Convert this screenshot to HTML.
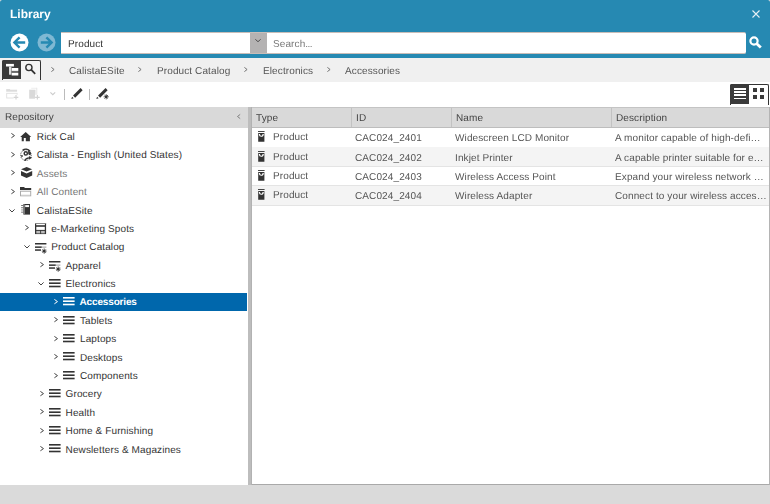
<!DOCTYPE html><html><head><meta charset="utf-8"><style>
*{margin:0;padding:0;box-sizing:border-box}
html,body{width:770px;height:504px;overflow:hidden;background:#d6dadc;font-family:"Liberation Sans",sans-serif;font-size:10px;color:#333}
.a{position:absolute}
.t{position:absolute;white-space:nowrap;line-height:12px;text-rendering:geometricPrecision}
.g{will-change:transform}
svg{position:absolute;overflow:visible}
</style></head><body><div class="a" style="left:0;top:58px;width:770px;height:446px;background:#fff"></div>
<div class="a" style="left:0;top:0;width:770px;height:58px;background:#2689b2;border-radius:2.5px 2.5px 0 0"></div>
<div class="t g" style="left:10px;top:6.94px;font-size:12px;line-height:14.40px;color:#fff;font-weight:bold;letter-spacing:0px;">Library</div>
<svg style="left:752px;top:10px" width="8" height="8" viewBox="0 0 8 8"><path d="M0.5 0.5L7.5 7.5M7.5 0.5L0.5 7.5" stroke="#e6f0f5" stroke-width="1.1"/></svg>
<svg style="left:10px;top:33px" width="19" height="19" viewBox="0 0 19 19"><circle cx="9.5" cy="9.5" r="9" fill="#fff"/><path d="M4.6 9.5H15.2M9.6 4.3L4.4 9.5L9.6 14.7" stroke="#2689b2" stroke-width="2.4" fill="none"/></svg>
<svg style="left:37px;top:33px" width="19" height="19" viewBox="0 0 19 19"><circle cx="9.5" cy="9.5" r="9" fill="#7fb8d3"/><path d="M3.8 9.5H14.4M9.4 4.3L14.6 9.5L9.4 14.7" stroke="#2689b2" stroke-width="2.4" fill="none"/></svg>
<div class="a" style="left:61px;top:32px;width:190px;height:22px;background:#fff;border-top:1px solid #c8bdb8;border-bottom:1px solid #c8bdb8"></div>
<div class="t g" style="left:68.3px;top:38.83px;font-size:10px;line-height:12.00px;color:#333;font-weight:normal;letter-spacing:0.11px;">Product</div>
<div class="a" style="left:250px;top:32px;width:17px;height:22px;background:#b4b2b2;border-top:1px solid #c8bdb8;border-bottom:1px solid #c8bdb8"></div>
<svg style="left:255px;top:39px" width="6" height="3" viewBox="0 0 6 3"><path d="M0.3 0.3L3 2.7L5.7 0.3" stroke="#444" stroke-width="0.9" fill="none"/></svg>
<div class="a" style="left:267px;top:32px;width:479px;height:22px;background:#fff;border-top:1px solid #c8bdb8;border-bottom:1px solid #c8bdb8;border-radius:0 2px 2px 0"></div>
<div class="t g" style="left:273px;top:38.83px;font-size:10px;line-height:12.00px;color:#777;font-weight:normal;letter-spacing:0.11px;">Search<span style="letter-spacing:-0.6px">...</span></div>
<svg style="left:749px;top:36px" width="13" height="13" viewBox="0 0 13 13"><circle cx="5" cy="5" r="3.6" stroke="#fff" stroke-width="2.2" fill="none"/><path d="M7.5 7.5L11.8 11.6" stroke="#fff" stroke-width="2.8"/></svg>
<div class="a" style="left:0;top:58px;width:770px;height:24px;background:#f0f0f0"></div>
<div class="a" style="left:2px;top:60px;width:39px;height:20px;border:1px solid #333;border-bottom:none;border-radius:2px 2px 0 0;background:#f4f4f4"></div>
<div class="a" style="left:2px;top:60px;width:19px;height:18.7px;background:#3a3a3a;border-radius:2px 0 0 0"></div>
<svg style="left:2px;top:60px" width="19" height="20" viewBox="0 0 19 20"><rect x="4" y="3.9" width="7.9" height="2.6" fill="#fff"/><rect x="7" y="6.5" width="2.4" height="8.2" fill="#ddd"/><rect x="9.7" y="8" width="6.6" height="2.9" fill="#fff"/><rect x="9.4" y="11.4" width="6.9" height="0.9" fill="#888"/><rect x="9.7" y="12.8" width="6.6" height="2.7" fill="#fff"/></svg>
<svg style="left:24px;top:63px" width="12" height="12" viewBox="0 0 12 12"><circle cx="4.9" cy="4.5" r="3.1" stroke="#333" stroke-width="1.4" fill="none"/><path d="M7.1 6.7L11.2 10.8" stroke="#333" stroke-width="1.8"/></svg>
<svg style="left:51.2px;top:67px" width="3.6" height="5" viewBox="0 0 3.6 5"><path d="M0.4 0.4L3.1 2.5L0.4 4.6" stroke="#666" stroke-width="0.9" fill="none"/></svg>
<div class="t g" style="left:69.2px;top:65.94px;font-size:10px;line-height:12.00px;color:#555;font-weight:normal;letter-spacing:0.11px;">CalistaESite</div>
<svg style="left:137.7px;top:67px" width="3.6" height="5" viewBox="0 0 3.6 5"><path d="M0.4 0.4L3.1 2.5L0.4 4.6" stroke="#666" stroke-width="0.9" fill="none"/></svg>
<div class="t g" style="left:156.8px;top:65.94px;font-size:10px;line-height:12.00px;color:#555;font-weight:normal;letter-spacing:0.11px;">Product Catalog</div>
<svg style="left:243.9px;top:67px" width="3.6" height="5" viewBox="0 0 3.6 5"><path d="M0.4 0.4L3.1 2.5L0.4 4.6" stroke="#666" stroke-width="0.9" fill="none"/></svg>
<div class="t g" style="left:262.5px;top:65.94px;font-size:10px;line-height:12.00px;color:#555;font-weight:normal;letter-spacing:0.11px;">Electronics</div>
<svg style="left:326.7px;top:67px" width="3.6" height="5" viewBox="0 0 3.6 5"><path d="M0.4 0.4L3.1 2.5L0.4 4.6" stroke="#666" stroke-width="0.9" fill="none"/></svg>
<div class="t g" style="left:345.3px;top:65.94px;font-size:10px;line-height:12.00px;color:#555;font-weight:normal;letter-spacing:0.11px;">Accessories</div>
<svg style="left:6px;top:88px" width="14" height="14" viewBox="0 0 14 14"><rect x="0.2" y="1" width="3.9" height="0.9" fill="#dcdcdc"/><rect x="0.2" y="1.7" width="10.9" height="2" fill="#dcdcdc"/><rect x="0.7" y="5.3" width="10.4" height="4.7" stroke="#e0e0e0" stroke-width="0.9" fill="none"/><rect x="7.6" y="6.8" width="5" height="5" fill="#fff"/><path d="M10 7V11.6M7.7 9.3H12.3" stroke="#d4d4d4" stroke-width="1.2"/></svg>
<svg style="left:29px;top:87px" width="13" height="14" viewBox="0 0 13 14"><rect x="2.2" y="0.8" width="5.8" height="0.8" fill="#e8e8e8"/><rect x="7.2" y="0.8" width="1.1" height="7.8" fill="#e8e8e8"/><rect x="0.2" y="2.7" width="6.3" height="9" fill="#d9d9d9"/><rect x="6" y="7.8" width="5" height="5" fill="#fff"/><path d="M8.4 8V12.6M6.1 10.3H10.7" stroke="#d4d4d4" stroke-width="1.2"/></svg>
<svg style="left:49.7px;top:92px" width="5.6" height="3.2" viewBox="0 0 5.6 3.2"><path d="M0.4 0.4L2.8 2.7L5.199999999999999 0.4" stroke="#ccc" stroke-width="1.1" fill="none"/></svg>
<div class="a" style="left:64px;top:89px;width:1px;height:11px;background:#bbb"></div>
<div class="a" style="left:89px;top:89px;width:1px;height:11px;background:#bbb"></div>
<svg style="left:71px;top:87px" width="13" height="13" viewBox="0 0 13 13"><path d="M3.1 9.6L10.6 2.1" stroke="#333" stroke-width="2.9"/><path d="M0.3 12L1.1 9.7L2.6 11.2Z" fill="#333"/></svg>
<svg style="left:95.5px;top:87px" width="14" height="14" viewBox="0 0 14 14"><path d="M3.1 9.6L10.6 2.1" stroke="#333" stroke-width="2.9"/><path d="M0.3 12L1.1 9.7L2.6 11.2Z" fill="#333"/><path d="M10.2 7.2V12.4M7.6 9.8H12.8M8.4 8L12 11.6M12 8L8.4 11.6" stroke="#333" stroke-width="0.8"/><circle cx="10.2" cy="9.8" r="1.2" fill="#333"/></svg>
<div class="a" style="left:730px;top:84px;width:39px;height:21px;border:1px solid #333;border-bottom:none;border-radius:2px 2px 0 0"></div>
<div class="a" style="left:730px;top:84px;width:19px;height:20px;background:#3a3a3a;border-radius:2px 0 0 0"></div>
<div class="a" style="left:734px;top:87.7px;width:12.3px;height:1.9px;background:#fff"></div>
<div class="a" style="left:734px;top:91px;width:12.3px;height:1.9px;background:#fff"></div>
<div class="a" style="left:734px;top:94.3px;width:12.3px;height:1.9px;background:#fff"></div>
<div class="a" style="left:734px;top:97.6px;width:12.3px;height:1.9px;background:#fff"></div>
<div class="a" style="left:753px;top:88.2px;width:3.5px;height:3.5px;background:#3a3a3a"></div>
<div class="a" style="left:753px;top:95.2px;width:3.5px;height:3.5px;background:#3a3a3a"></div>
<div class="a" style="left:760.2px;top:88.2px;width:3.5px;height:3.5px;background:#3a3a3a"></div>
<div class="a" style="left:760.2px;top:95.2px;width:3.5px;height:3.5px;background:#3a3a3a"></div>
<div class="a" style="left:0;top:485px;width:770px;height:19px;background:#dadada"></div>
<div class="a" style="left:0;top:107px;width:248px;height:20.7px;background:#d9d9d9"></div>
<div class="t g" style="left:4.5px;top:111.83px;font-size:10px;line-height:12.00px;color:#444;font-weight:normal;letter-spacing:0.11px;">Repository</div>
<svg style="left:237px;top:114px" width="3.6" height="5" viewBox="0 0 3.6 5"><path d="M3.2 0.4L0.5 2.5L3.2 4.6" stroke="#777" stroke-width="0.9" fill="none"/></svg>
<div class="a" style="left:248px;top:107px;width:4px;height:378px;background:#bdbdbd;border-right:1px solid #b2b2b2"></div>
<div class="a" style="left:252px;top:107px;width:518px;height:378px;background:#fff;border-bottom:1px solid #a9a9a9;border-right:1px solid #b4b4b4"></div>
<div class="a" style="left:252px;top:107px;width:517px;height:21px;background:#d9d9d9;border-top:1px solid #c4c4c4;border-bottom:1px solid #bdbdbd"></div>
<div class="a" style="left:351px;top:108px;width:1px;height:19px;background:#c2c2c2"></div>
<div class="a" style="left:451px;top:108px;width:1px;height:19px;background:#c2c2c2"></div>
<div class="a" style="left:611px;top:108px;width:1px;height:19px;background:#c2c2c2"></div>
<div class="t g" style="left:256.2px;top:112.83px;font-size:10px;line-height:12.00px;color:#444;font-weight:normal;letter-spacing:0.11px;">Type</div>
<div class="t g" style="left:356px;top:112.83px;font-size:10px;line-height:12.00px;color:#444;font-weight:normal;letter-spacing:0.11px;">ID</div>
<div class="t g" style="left:456.2px;top:112.83px;font-size:10px;line-height:12.00px;color:#444;font-weight:normal;letter-spacing:0.11px;">Name</div>
<div class="t g" style="left:616.1px;top:112.83px;font-size:10px;line-height:12.00px;color:#444;font-weight:normal;letter-spacing:0.11px;">Description</div>
<div class="a" style="left:252px;top:146.60px;width:517px;height:1px;background:#e4e4e4"></div>
<svg style="left:258px;top:131.00px" width="7" height="11" viewBox="0 0 7 11"><rect x="0" y="0" width="6.6" height="0.9" fill="#333"/><rect x="0.2" y="2" width="6.2" height="8.75" fill="#333"/><path d="M1.5 2.9V3.4A1.8 1.8 0 0 0 5.1 3.4V2.9" stroke="#fff" stroke-width="1.3" fill="none"/><rect x="2.6" y="2.3" width="1.4" height="2.2" fill="#333"/></svg>
<div class="t g" style="left:272.5px;top:131.84px;font-size:10px;line-height:12.00px;color:#555;font-weight:normal;letter-spacing:0.11px;">Product</div>
<div class="t g" style="left:355px;top:132.84px;font-size:10px;line-height:12.00px;color:#555;font-weight:normal;letter-spacing:0.11px;">CAC024_2401</div>
<div class="t g" style="left:455px;top:132.84px;font-size:10px;line-height:12.00px;color:#555;font-weight:normal;letter-spacing:0.11px;">Widescreen LCD Monitor</div>
<div class="t g" style="left:615px;top:132.84px;font-size:10px;line-height:12.00px;color:#555;font-weight:normal;letter-spacing:0.11px;">A monitor capable of high-defi&hellip;</div>
<div class="a" style="left:252px;top:147.10px;width:517px;height:19.4px;background:#f4f4f4"></div>
<div class="a" style="left:252px;top:166.00px;width:517px;height:1px;background:#e4e4e4"></div>
<svg style="left:258px;top:151.40px" width="7" height="11" viewBox="0 0 7 11"><rect x="0" y="0" width="6.6" height="0.9" fill="#333"/><rect x="0.2" y="2" width="6.2" height="8.75" fill="#333"/><path d="M1.5 2.9V3.4A1.8 1.8 0 0 0 5.1 3.4V2.9" stroke="#fff" stroke-width="1.3" fill="none"/><rect x="2.6" y="2.3" width="1.4" height="2.2" fill="#333"/></svg>
<div class="t g" style="left:272.5px;top:152.23px;font-size:10px;line-height:12.00px;color:#555;font-weight:normal;letter-spacing:0.11px;">Product</div>
<div class="t g" style="left:355px;top:153.23px;font-size:10px;line-height:12.00px;color:#555;font-weight:normal;letter-spacing:0.11px;">CAC024_2402</div>
<div class="t g" style="left:455px;top:153.23px;font-size:10px;line-height:12.00px;color:#555;font-weight:normal;letter-spacing:0.11px;">Inkjet Printer</div>
<div class="t g" style="left:615px;top:153.23px;font-size:10px;line-height:12.00px;color:#555;font-weight:normal;letter-spacing:0.11px;">A capable printer suitable for e&hellip;</div>
<div class="a" style="left:252px;top:185.40px;width:517px;height:1px;background:#e4e4e4"></div>
<svg style="left:258px;top:170.20px" width="7" height="11" viewBox="0 0 7 11"><rect x="0" y="0" width="6.6" height="0.9" fill="#333"/><rect x="0.2" y="2" width="6.2" height="8.75" fill="#333"/><path d="M1.5 2.9V3.4A1.8 1.8 0 0 0 5.1 3.4V2.9" stroke="#fff" stroke-width="1.3" fill="none"/><rect x="2.6" y="2.3" width="1.4" height="2.2" fill="#333"/></svg>
<div class="t g" style="left:272.5px;top:171.03px;font-size:10px;line-height:12.00px;color:#555;font-weight:normal;letter-spacing:0.11px;">Product</div>
<div class="t g" style="left:355px;top:172.03px;font-size:10px;line-height:12.00px;color:#555;font-weight:normal;letter-spacing:0.11px;">CAC024_2403</div>
<div class="t g" style="left:455px;top:172.03px;font-size:10px;line-height:12.00px;color:#555;font-weight:normal;letter-spacing:0.11px;">Wireless Access Point</div>
<div class="t g" style="left:615px;top:172.03px;font-size:10px;line-height:12.00px;color:#555;font-weight:normal;letter-spacing:0.11px;">Expand your wireless network &hellip;</div>
<div class="a" style="left:252px;top:185.90px;width:517px;height:19.4px;background:#f4f4f4"></div>
<div class="a" style="left:252px;top:204.80px;width:517px;height:1px;background:#e4e4e4"></div>
<svg style="left:258px;top:189.20px" width="7" height="11" viewBox="0 0 7 11"><rect x="0" y="0" width="6.6" height="0.9" fill="#333"/><rect x="0.2" y="2" width="6.2" height="8.75" fill="#333"/><path d="M1.5 2.9V3.4A1.8 1.8 0 0 0 5.1 3.4V2.9" stroke="#fff" stroke-width="1.3" fill="none"/><rect x="2.6" y="2.3" width="1.4" height="2.2" fill="#333"/></svg>
<div class="t g" style="left:272.5px;top:190.03px;font-size:10px;line-height:12.00px;color:#555;font-weight:normal;letter-spacing:0.11px;">Product</div>
<div class="t g" style="left:355px;top:191.03px;font-size:10px;line-height:12.00px;color:#555;font-weight:normal;letter-spacing:0.11px;">CAC024_2404</div>
<div class="t g" style="left:455px;top:191.03px;font-size:10px;line-height:12.00px;color:#555;font-weight:normal;letter-spacing:0.11px;">Wireless Adapter</div>
<div class="t g" style="left:615px;top:191.03px;font-size:10px;line-height:12.00px;color:#555;font-weight:normal;letter-spacing:0.11px;">Connect to your wireless acces&hellip;</div>
<svg style="left:10.9px;top:133.3px" width="4" height="5.2" viewBox="0 0 4 5.2"><path d="M0.4 0.4L3.5 2.6L0.4 4.8" stroke="#444" stroke-width="1.0" fill="none"/></svg>
<svg style="left:20.2px;top:131.70px" width="11" height="10" viewBox="0 0 11 10"><path d="M5.7 0.1L11.2 5H9.9V9.3H5.8V6.1H3.8V9.3H1.7V5H0.2Z" fill="#333"/></svg>
<div class="t" style="left:36.8px;top:132.00px;font-size:10px;line-height:12.00px;color:#333;font-weight:normal;letter-spacing:0.11px;">Rick Cal</div>
<svg style="left:10.9px;top:151.70000000000002px" width="4" height="5.2" viewBox="0 0 4 5.2"><path d="M0.4 0.4L3.5 2.6L0.4 4.8" stroke="#444" stroke-width="1.0" fill="none"/></svg>
<svg style="left:20.2px;top:149.10px" width="12.5" height="12.5" viewBox="0 0 12.5 12.5"><circle cx="5.9" cy="6.1" r="5.3" stroke="#333" stroke-width="0.9" stroke-dasharray="1 0.9" fill="none"/><path d="M2.6 1.4A5.4 5.4 0 0 1 10 2.3" stroke="#333" stroke-width="1.5" fill="none"/><circle cx="5.8" cy="4.4" r="1.6" stroke="#333" stroke-width="1.5" fill="none"/><path d="M8 1.8L10.9 3.2L11.1 5.6L9 6.2L8.2 4.2Z" fill="#333"/><path d="M1 6.3L2.6 6L2.8 7.8L1.4 8Z" fill="#333"/><path d="M4.8 11.9C5.3 10 7 9 9.3 8.9" stroke="#333" stroke-width="1.4" fill="none"/><path d="M8.9 7L12.2 8.7L9.1 10.5Z" fill="#333"/></svg>
<div class="t" style="left:36.8px;top:150.00px;font-size:10px;line-height:12.00px;color:#333;font-weight:normal;letter-spacing:0.11px;">Calista - English (United States)</div>
<svg style="left:10.9px;top:170.10000000000002px" width="4" height="5.2" viewBox="0 0 4 5.2"><path d="M0.4 0.4L3.5 2.6L0.4 4.8" stroke="#444" stroke-width="1.0" fill="none"/></svg>
<svg style="left:20.599999999999998px;top:167.30px" width="12" height="12" viewBox="0 0 12 12"><path d="M5.6 0L11.2 2.2L5.6 4.4L0 2.2Z" fill="#333"/><path d="M0 4L5.6 6.4L11.2 4V8.5L5.6 11L0 8.5Z" fill="#333"/></svg>
<div class="t" style="left:36.8px;top:169.00px;font-size:10px;line-height:12.00px;color:#777;font-weight:normal;letter-spacing:0.11px;">Assets</div>
<svg style="left:10.9px;top:188.5px" width="4" height="5.2" viewBox="0 0 4 5.2"><path d="M0.4 0.4L3.5 2.6L0.4 4.8" stroke="#444" stroke-width="1.0" fill="none"/></svg>
<svg style="left:20.4px;top:187.10px" width="12" height="10" viewBox="0 0 12 10"><rect x="0" y="0" width="4.5" height="1.5" fill="#333"/><rect x="0" y="1" width="11.2" height="2" fill="#333"/><rect x="0.5" y="4.2" width="10.2" height="4.6" stroke="#aaa" stroke-width="1" fill="#fff"/><rect x="1" y="7.6" width="9.2" height="0.8" fill="#ddd"/></svg>
<div class="t" style="left:36.8px;top:187.00px;font-size:10px;line-height:12.00px;color:#777;font-weight:normal;letter-spacing:0.11px;">All Content</div>
<svg style="left:9.3px;top:208.5px" width="6" height="3.5" viewBox="0 0 6 3.5"><path d="M0.4 0.4L3.0 3.0L5.6 0.4" stroke="#444" stroke-width="1.0" fill="none"/></svg>
<svg style="left:20.8px;top:203.90px" width="10" height="11" viewBox="0 0 10 11"><rect x="2.4" y="0" width="6.6" height="10.6" fill="#333"/><rect x="2.9" y="0.4" width="0.8" height="9.8" fill="#999"/><rect x="4.2" y="1.1" width="3.9" height="2" fill="#fff"/><rect x="0.1" y="1.1" width="2.3" height="0.9" fill="#666"/><rect x="0.1" y="3.3" width="2.3" height="0.9" fill="#666"/><rect x="0.1" y="5.5" width="2.3" height="0.9" fill="#888"/><rect x="0.1" y="7.7" width="2.3" height="0.9" fill="#666"/></svg>
<div class="t" style="left:36.8px;top:206.00px;font-size:10px;line-height:12.00px;color:#333;font-weight:normal;letter-spacing:0.11px;">CalistaESite</div>
<svg style="left:25.3px;top:225.3px" width="4" height="5.2" viewBox="0 0 4 5.2"><path d="M0.4 0.4L3.5 2.6L0.4 4.8" stroke="#444" stroke-width="1.0" fill="none"/></svg>
<svg style="left:34.9px;top:222.90px" width="11.2" height="11.2" viewBox="0 0 11.2 11.2"><rect x="0" y="0" width="11.1" height="11.1" fill="#333"/><rect x="0" y="0" width="11.1" height="0.9" fill="#888"/><rect x="1.2" y="0.9" width="8.7" height="1.3" fill="#fff"/><rect x="1.3" y="3.8" width="8.5" height="3.1" fill="#fff"/><rect x="1.3" y="7.9" width="3.9" height="2.5" fill="#bbb"/><rect x="6.1" y="7.9" width="3.7" height="2.5" fill="#bbb"/></svg>
<div class="t" style="left:51.199999999999996px;top:224.00px;font-size:10px;line-height:12.00px;color:#333;font-weight:normal;letter-spacing:0.11px;">e-Marketing Spots</div>
<svg style="left:23.700000000000003px;top:245.29999999999998px" width="6" height="3.5" viewBox="0 0 6 3.5"><path d="M0.4 0.4L3.0 3.0L5.6 0.4" stroke="#444" stroke-width="1.0" fill="none"/></svg>
<svg style="left:34.9px;top:242.90px" width="13" height="11" viewBox="0 0 13 11"><rect x="0" y="0" width="11.4" height="1.5" fill="#333"/><rect x="0" y="3.4" width="6.8" height="1.5" fill="#333"/><rect x="6.8" y="3.4" width="4.6" height="1.5" fill="#bbb"/><rect x="0" y="6.3" width="6" height="1.5" fill="#333"/><path d="M9.2 5.5V10.7M6.8 8.1H11.6M7.5 6.4L10.9 9.8M10.9 6.4L7.5 9.8" stroke="#333" stroke-width="0.9"/><circle cx="9.2" cy="8.1" r="1.2" fill="#333"/></svg>
<div class="t" style="left:51.199999999999996px;top:242.00px;font-size:10px;line-height:12.00px;color:#333;font-weight:normal;letter-spacing:0.11px;">Product Catalog</div>
<svg style="left:39.7px;top:262.09999999999997px" width="4" height="5.2" viewBox="0 0 4 5.2"><path d="M0.4 0.4L3.5 2.6L0.4 4.8" stroke="#444" stroke-width="1.0" fill="none"/></svg>
<svg style="left:49.3px;top:261.30px" width="13" height="11" viewBox="0 0 13 11"><rect x="0" y="0" width="11.4" height="1.5" fill="#333"/><rect x="0" y="3.4" width="6.8" height="1.5" fill="#333"/><rect x="6.8" y="3.4" width="4.6" height="1.5" fill="#bbb"/><rect x="0" y="6.3" width="6" height="1.5" fill="#333"/><path d="M9.2 5.5V10.7M6.8 8.1H11.6M7.5 6.4L10.9 9.8M10.9 6.4L7.5 9.8" stroke="#333" stroke-width="0.9"/><circle cx="9.2" cy="8.1" r="1.2" fill="#333"/></svg>
<div class="t" style="left:65.6px;top:261.01px;font-size:10px;line-height:12.00px;color:#333;font-weight:normal;letter-spacing:0.11px;">Apparel</div>
<svg style="left:38.1px;top:282.09999999999997px" width="6" height="3.5" viewBox="0 0 6 3.5"><path d="M0.4 0.4L3.0 3.0L5.6 0.4" stroke="#444" stroke-width="1.0" fill="none"/></svg>
<svg style="left:48.5px;top:278.80px" width="12" height="9" viewBox="0 0 12 9"><rect x="0" y="0" width="11.6" height="1.6" fill="#333"/><rect x="0" y="3.4" width="11.6" height="1.6" fill="#333"/><rect x="0" y="6.7" width="11.6" height="1.6" fill="#333"/></svg>
<div class="t" style="left:65.6px;top:279.01px;font-size:10px;line-height:12.00px;color:#333;font-weight:normal;letter-spacing:0.11px;">Electronics</div>
<div class="a" style="left:0;top:292.80px;width:247px;height:17.8px;background:#0067ac"></div>
<svg style="left:54.1px;top:298.90000000000003px" width="4" height="5.2" viewBox="0 0 4 5.2"><path d="M0.4 0.4L3.5 2.6L0.4 4.8" stroke="#fff" stroke-width="1.0" fill="none"/></svg>
<svg style="left:62.900000000000006px;top:297.20px" width="12" height="9" viewBox="0 0 12 9"><rect x="0" y="0" width="11.6" height="1.6" fill="#fff"/><rect x="0" y="3.4" width="11.6" height="1.6" fill="#fff"/><rect x="0" y="6.7" width="11.6" height="1.6" fill="#fff"/></svg>
<div class="t" style="left:79.5px;top:297.01px;font-size:10px;line-height:12.00px;color:#fff;font-weight:bold;letter-spacing:-0.15px;">Accessories</div>
<svg style="left:54.1px;top:317.3px" width="4" height="5.2" viewBox="0 0 4 5.2"><path d="M0.4 0.4L3.5 2.6L0.4 4.8" stroke="#444" stroke-width="1.0" fill="none"/></svg>
<svg style="left:62.900000000000006px;top:315.60px" width="12" height="9" viewBox="0 0 12 9"><rect x="0" y="0" width="11.6" height="1.6" fill="#333"/><rect x="0" y="3.4" width="11.6" height="1.6" fill="#333"/><rect x="0" y="6.7" width="11.6" height="1.6" fill="#333"/></svg>
<div class="t" style="left:80.0px;top:316.01px;font-size:10px;line-height:12.00px;color:#333;font-weight:normal;letter-spacing:0.11px;">Tablets</div>
<svg style="left:54.1px;top:335.7px" width="4" height="5.2" viewBox="0 0 4 5.2"><path d="M0.4 0.4L3.5 2.6L0.4 4.8" stroke="#444" stroke-width="1.0" fill="none"/></svg>
<svg style="left:62.900000000000006px;top:334.00px" width="12" height="9" viewBox="0 0 12 9"><rect x="0" y="0" width="11.6" height="1.6" fill="#333"/><rect x="0" y="3.4" width="11.6" height="1.6" fill="#333"/><rect x="0" y="6.7" width="11.6" height="1.6" fill="#333"/></svg>
<div class="t" style="left:80.0px;top:334.01px;font-size:10px;line-height:12.00px;color:#333;font-weight:normal;letter-spacing:0.11px;">Laptops</div>
<svg style="left:54.1px;top:354.09999999999997px" width="4" height="5.2" viewBox="0 0 4 5.2"><path d="M0.4 0.4L3.5 2.6L0.4 4.8" stroke="#444" stroke-width="1.0" fill="none"/></svg>
<svg style="left:62.900000000000006px;top:352.40px" width="12" height="9" viewBox="0 0 12 9"><rect x="0" y="0" width="11.6" height="1.6" fill="#333"/><rect x="0" y="3.4" width="11.6" height="1.6" fill="#333"/><rect x="0" y="6.7" width="11.6" height="1.6" fill="#333"/></svg>
<div class="t" style="left:80.0px;top:353.01px;font-size:10px;line-height:12.00px;color:#333;font-weight:normal;letter-spacing:0.11px;">Desktops</div>
<svg style="left:54.1px;top:372.5px" width="4" height="5.2" viewBox="0 0 4 5.2"><path d="M0.4 0.4L3.5 2.6L0.4 4.8" stroke="#444" stroke-width="1.0" fill="none"/></svg>
<svg style="left:62.900000000000006px;top:370.80px" width="12" height="9" viewBox="0 0 12 9"><rect x="0" y="0" width="11.6" height="1.6" fill="#333"/><rect x="0" y="3.4" width="11.6" height="1.6" fill="#333"/><rect x="0" y="6.7" width="11.6" height="1.6" fill="#333"/></svg>
<div class="t" style="left:80.0px;top:371.01px;font-size:10px;line-height:12.00px;color:#333;font-weight:normal;letter-spacing:0.11px;">Components</div>
<svg style="left:39.7px;top:390.9px" width="4" height="5.2" viewBox="0 0 4 5.2"><path d="M0.4 0.4L3.5 2.6L0.4 4.8" stroke="#444" stroke-width="1.0" fill="none"/></svg>
<svg style="left:48.5px;top:389.20px" width="12" height="9" viewBox="0 0 12 9"><rect x="0" y="0" width="11.6" height="1.6" fill="#333"/><rect x="0" y="3.4" width="11.6" height="1.6" fill="#333"/><rect x="0" y="6.7" width="11.6" height="1.6" fill="#333"/></svg>
<div class="t" style="left:65.6px;top:389.01px;font-size:10px;line-height:12.00px;color:#333;font-weight:normal;letter-spacing:0.11px;">Grocery</div>
<svg style="left:39.7px;top:409.3px" width="4" height="5.2" viewBox="0 0 4 5.2"><path d="M0.4 0.4L3.5 2.6L0.4 4.8" stroke="#444" stroke-width="1.0" fill="none"/></svg>
<svg style="left:48.5px;top:407.60px" width="12" height="9" viewBox="0 0 12 9"><rect x="0" y="0" width="11.6" height="1.6" fill="#333"/><rect x="0" y="3.4" width="11.6" height="1.6" fill="#333"/><rect x="0" y="6.7" width="11.6" height="1.6" fill="#333"/></svg>
<div class="t" style="left:65.6px;top:408.01px;font-size:10px;line-height:12.00px;color:#333;font-weight:normal;letter-spacing:0.11px;">Health</div>
<svg style="left:39.7px;top:427.7px" width="4" height="5.2" viewBox="0 0 4 5.2"><path d="M0.4 0.4L3.5 2.6L0.4 4.8" stroke="#444" stroke-width="1.0" fill="none"/></svg>
<svg style="left:48.5px;top:426.00px" width="12" height="9" viewBox="0 0 12 9"><rect x="0" y="0" width="11.6" height="1.6" fill="#333"/><rect x="0" y="3.4" width="11.6" height="1.6" fill="#333"/><rect x="0" y="6.7" width="11.6" height="1.6" fill="#333"/></svg>
<div class="t" style="left:65.6px;top:426.01px;font-size:10px;line-height:12.00px;color:#333;font-weight:normal;letter-spacing:0.11px;">Home &amp; Furnishing</div>
<svg style="left:39.7px;top:446.09999999999997px" width="4" height="5.2" viewBox="0 0 4 5.2"><path d="M0.4 0.4L3.5 2.6L0.4 4.8" stroke="#444" stroke-width="1.0" fill="none"/></svg>
<svg style="left:48.5px;top:444.40px" width="12" height="9" viewBox="0 0 12 9"><rect x="0" y="0" width="11.6" height="1.6" fill="#333"/><rect x="0" y="3.4" width="11.6" height="1.6" fill="#333"/><rect x="0" y="6.7" width="11.6" height="1.6" fill="#333"/></svg>
<div class="t" style="left:65.6px;top:445.01px;font-size:10px;line-height:12.00px;color:#333;font-weight:normal;letter-spacing:0.11px;">Newsletters &amp; Magazines</div></body></html>
